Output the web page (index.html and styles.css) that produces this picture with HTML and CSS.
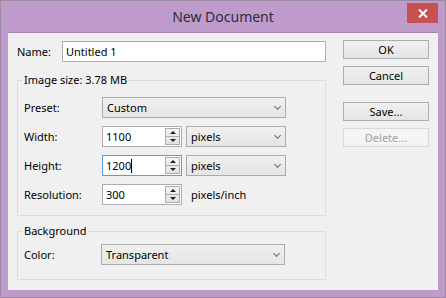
FILE: index.html
```html
<!DOCTYPE html>
<html lang="en">
<head>
    <meta charset="UTF-8">
    <title>New Document</title>
    <link rel="stylesheet" href="styles.css">
</head>
<body>
    <div class="window">
        <div class="titlebar">
            <span></span>
            <span class="title">New Document</span>
            <span class="close">
                <svg width="10" height="9" viewBox="0 0 10 9"><path d="M1 0.5 L9 8.5 M9 0.5 L1 8.5" stroke="#fff" stroke-width="2"/></svg>
            </span>
        </div>

        <div class="client">
            <div class="left">
                <div class="name-row">
                    <span class="name-label">Name:</span>
                    <div class="textbox">Untitled 1</div>
                </div>

                <fieldset class="group">
                    <legend>Image size: 3.78 MB</legend>
                    <div class="rows">
                        <div class="row">
                            <span class="label">Preset:</span>
                            <div class="select wide">Custom<span class="arrow"></span></div>
                        </div>
                        <div class="row">
                            <span class="label">Width:</span>
                            <div class="number"><span class="value">1100</span><span class="spin"><i class="up"></i><i class="down"></i></span></div>
                            <div class="select unit">pixels<span class="arrow"></span></div>
                        </div>
                        <div class="row">
                            <span class="label">Height:</span>
                            <div class="number focused"><span class="value">1200<span class="caret"></span></span><span class="spin"><i class="up"></i><i class="down"></i></span></div>
                            <div class="select unit">pixels<span class="arrow"></span></div>
                        </div>
                        <div class="row">
                            <span class="label">Resolution:</span>
                            <div class="number"><span class="value">300</span><span class="spin"><i class="up"></i><i class="down"></i></span></div>
                            <span class="unit-text">pixels/inch</span>
                        </div>
                    </div>
                </fieldset>

                <fieldset class="group bg-group">
                    <legend>Background</legend>
                    <div class="rows">
                        <div class="row">
                            <span class="label">Color:</span>
                            <div class="select wide">Transparent<span class="arrow"></span></div>
                        </div>
                    </div>
                </fieldset>
            </div>

            <div class="buttons">
                <button class="btn">OK</button>
                <button class="btn">Cancel</button>
                <button class="btn spaced">Save...</button>
                <button class="btn" disabled>Delete...</button>
            </div>
        </div>
    </div>
</body>
</html>
```

FILE: styles.css
```css
body {
    margin: 0;
    font-family: "Noto Sans", "Liberation Sans", sans-serif;
    font-size: 11px;
    color: #000;
}
.window {
    width: 446px;
    height: 298px;
    box-sizing: border-box;
    border: 1px solid #9a8aa2;
    background-color: #bf9bcc;
    display: flex;
    flex-direction: column;
}
.titlebar {
    height: 31px;
    display: grid;
    grid-template-columns: 1fr auto 1fr;
    align-items: center;
}
.title {
    font-size: 14px;
    color: #2c2b40;
    padding-bottom: 1px;
}
.close {
    justify-self: end;
    align-self: start;
    margin: 2px 7px 0 0;
    width: 31px;
    height: 20px;
    background-color: #c75050;
    display: flex;
    align-items: center;
    justify-content: center;
}
.client {
    flex: 1;
    margin: 0 7px 7px;
    background-color: #f0f0f0;
    border-top: 1px solid #a686b3;
    padding: 8px 9px 0 9px;
    display: flex;
    gap: 17px;
}
.left {
    width: 309px;
}
.name-row {
    display: flex;
    align-items: center;
    height: 21px;
}
.name-label {
    width: 45px;
}
.textbox {
    flex: 1;
    height: 21px;
    box-sizing: border-box;
    border: 1px solid #abadb3;
    background: #fff;
    padding-left: 3px;
    line-height: 19px;
}
.group {
    margin: 10px 0 0;
    padding: 0 6px 10px;
    border: 1px solid #dcdcdc;
    min-width: 0;
}
.group legend {
    padding: 0 1px;
    margin-left: -1px;
    line-height: 16px;
}
.rows {
    display: flex;
    flex-direction: column;
    gap: 8px;
    padding-top: 9px;
}
.bg-group {
    margin-top: 7px;
    padding-bottom: 14px;
}
.bg-group .rows {
    padding-top: 5px;
}
.bg-group .select {
    margin-left: -1px;
}
.row {
    display: flex;
    align-items: center;
    height: 21px;
}
.label {
    width: 78px;
}
.select {
    height: 21px;
    box-sizing: border-box;
    border: 1px solid #acacac;
    background: linear-gradient(#f0f0f0, #e5e5e5);
    padding-left: 4px;
    line-height: 19px;
    display: flex;
    justify-content: space-between;
    align-items: center;
}
.select.wide {
    width: 184px;
}
.select.unit {
    width: 100px;
    margin-left: 4px;
}
.arrow {
    width: 4px;
    height: 4px;
    border-right: 1.5px solid #6a6a6a;
    border-bottom: 1.5px solid #6a6a6a;
    transform: rotate(45deg);
    margin: 0 5px 3px 0;
}
.number {
    width: 80px;
    height: 21px;
    box-sizing: border-box;
    border: 1px solid #abadb3;
    background: #fff;
    display: flex;
    padding: 1px;
}
.number.focused {
    border-color: #569de5;
}
.number .value {
    flex: 1;
    padding-left: 2px;
    line-height: 17px;
    display: flex;
    align-items: center;
}
.caret {
    width: 1px;
    height: 14px;
    background: #000;
}
.spin {
    width: 13px;
    border: 1px solid #acacac;
    background: linear-gradient(#f4f4f4, #e2e2e2);
    display: flex;
    flex-direction: column;
}
.spin i {
    flex: 1;
    display: flex;
    align-items: center;
    justify-content: center;
}
.spin .up {
    border-bottom: 1px solid #acacac;
}
.spin .up::before,
.spin .down::before {
    content: "";
    border-left: 3px solid transparent;
    border-right: 3px solid transparent;
}
.spin .up::before {
    border-bottom: 3px solid #222;
}
.spin .down::before {
    border-top: 3px solid #222;
}
.unit-text {
    margin-left: 9px;
}
.buttons {
    width: 86px;
    margin-top: -1px;
    display: flex;
    flex-direction: column;
    gap: 7px;
}
.btn {
    height: 19px;
    box-sizing: border-box;
    border: 1px solid #acacac;
    background: linear-gradient(#f0f0f0, #e5e5e5);
    font-family: inherit;
    font-size: 11px;
    color: #000;
    padding: 0;
    line-height: 16px;
}
.btn.spaced {
    margin-top: 10px;
}
.btn:disabled {
    border-color: #d9d9d9;
    background: #f4f4f4;
    color: #a3a3a3;
}
```
